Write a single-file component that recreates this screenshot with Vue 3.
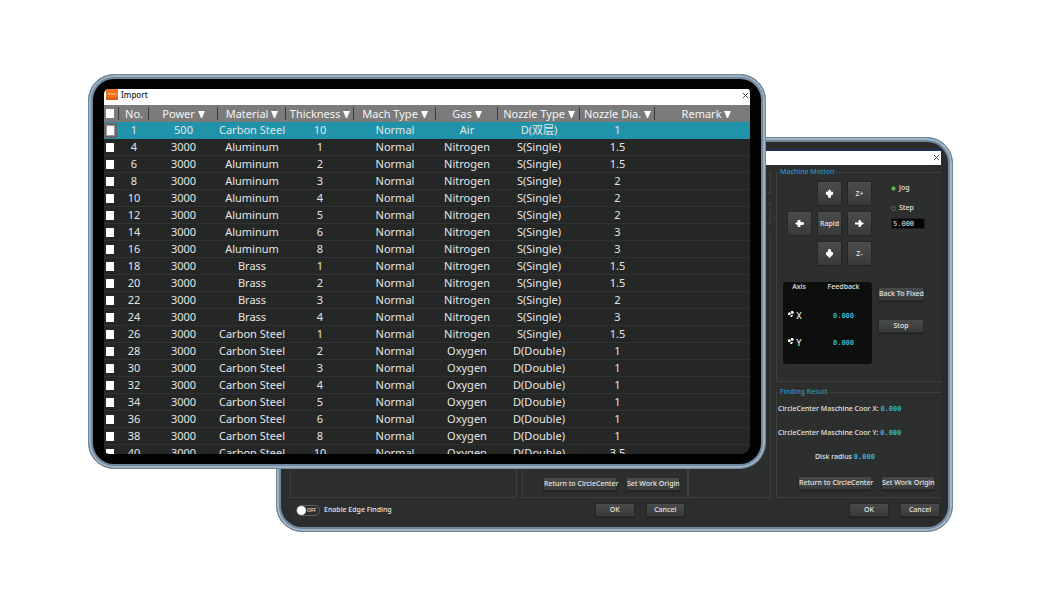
<script setup>
import { ref } from 'vue'

const columns = [
  { key: 'no', label: 'No.', filter: false },
  { key: 'power', label: 'Power', filter: true },
  { key: 'material', label: 'Material', filter: true },
  { key: 'thickness', label: 'Thickness', filter: true },
  { key: 'mach', label: 'Mach Type', filter: true },
  { key: 'gas', label: 'Gas', filter: true },
  { key: 'nozzle', label: 'Nozzle Type', filter: true },
  { key: 'dia', label: 'Nozzle Dia.', filter: true },
  { key: 'remark', label: 'Remark', filter: true },
]

const rows = [
  [1, 500, 'Carbon Steel', 10, 'Normal', 'Air', 'D(双层)', '1'],
  [4, 3000, 'Aluminum', 1, 'Normal', 'Nitrogen', 'S(Single)', '1.5'],
  [6, 3000, 'Aluminum', 2, 'Normal', 'Nitrogen', 'S(Single)', '1.5'],
  [8, 3000, 'Aluminum', 3, 'Normal', 'Nitrogen', 'S(Single)', '2'],
  [10, 3000, 'Aluminum', 4, 'Normal', 'Nitrogen', 'S(Single)', '2'],
  [12, 3000, 'Aluminum', 5, 'Normal', 'Nitrogen', 'S(Single)', '2'],
  [14, 3000, 'Aluminum', 6, 'Normal', 'Nitrogen', 'S(Single)', '3'],
  [16, 3000, 'Aluminum', 8, 'Normal', 'Nitrogen', 'S(Single)', '3'],
  [18, 3000, 'Brass', 1, 'Normal', 'Nitrogen', 'S(Single)', '1.5'],
  [20, 3000, 'Brass', 2, 'Normal', 'Nitrogen', 'S(Single)', '1.5'],
  [22, 3000, 'Brass', 3, 'Normal', 'Nitrogen', 'S(Single)', '2'],
  [24, 3000, 'Brass', 4, 'Normal', 'Nitrogen', 'S(Single)', '3'],
  [26, 3000, 'Carbon Steel', 1, 'Normal', 'Nitrogen', 'S(Single)', '1.5'],
  [28, 3000, 'Carbon Steel', 2, 'Normal', 'Oxygen', 'D(Double)', '1'],
  [30, 3000, 'Carbon Steel', 3, 'Normal', 'Oxygen', 'D(Double)', '1'],
  [32, 3000, 'Carbon Steel', 4, 'Normal', 'Oxygen', 'D(Double)', '1'],
  [34, 3000, 'Carbon Steel', 5, 'Normal', 'Oxygen', 'D(Double)', '1'],
  [36, 3000, 'Carbon Steel', 6, 'Normal', 'Oxygen', 'D(Double)', '1'],
  [38, 3000, 'Carbon Steel', 8, 'Normal', 'Oxygen', 'D(Double)', '1'],
  [40, 3000, 'Carbon Steel', 10, 'Normal', 'Oxygen', 'D(Double)', '3.5'],
]

const selected = ref(0)
const mode = ref('jog')
const step = ref('5.000')
const edge = ref(false)
</script>

<template>
  <main class="stage">
    <section class="device back" aria-label="Edge finding">
      <div class="strip"></div>
      <header class="bar">
        <button class="close" aria-label="Close dialog">
          <svg viewBox="0 0 8 8"><path d="M1 1L7 7M7 1L1 7" /></svg>
        </button>
      </header>
      <div class="body">
        <div class="group"></div>
        <div class="group actions">
          <button class="btn return">Return to CircleCenter</button>
          <button class="btn origin">Set Work Origin</button>
        </div>
        <div class="stack">
          <div class="group"></div>
          <div class="group"></div>
          <div class="group"></div>
        </div>
        <div class="side">
          <fieldset class="motion">
            <legend>Machine Motion</legend>
            <div class="drive">
              <div class="pad">
                <button class="key up" aria-label="Up">
                  <svg viewBox="0 0 10 10"><path d="M5 0L7 3H9V6L7 7L6 10H4L3 7L1 6V3H3Z" /></svg>
                </button>
                <button class="key zp">Z+</button>
                <button class="key left" aria-label="Left">
                  <svg viewBox="0 0 10 10"><path d="M0 5L3 3V1H6V3L10 4V6L6 7V9H3V7Z" /></svg>
                </button>
                <button class="key rapid">Rapid</button>
                <button class="key right" aria-label="Right">
                  <svg viewBox="0 0 10 10"><path d="M10 5L7 7L6 9H4V6L0 6V4H4V1H6L7 3Z" /></svg>
                </button>
                <button class="key down" aria-label="Down">
                  <svg viewBox="0 0 10 10"><path d="M5 10L7 8L9 6V4L7 3L6 0H4L3 3L1 4V6L3 8Z" /></svg>
                </button>
                <button class="key zm">Z-</button>
              </div>
              <div class="modes">
                <label><input v-model="mode" type="radio" name="mode" value="jog" />Jog</label>
                <label><input v-model="mode" type="radio" name="mode" value="step" />Step</label>
                <input v-model="step" class="step" type="text" aria-label="Step length" />
              </div>
            </div>
            <div class="feedback">
              <div class="panel">
                <table class="axes">
                  <thead>
                    <tr><th>Axis</th><th>Feedback</th></tr>
                  </thead>
                  <tbody>
                    <tr v-for="axis in ['X', 'Y']" :key="axis">
                      <td>
                        <svg viewBox="0 0 6 6"><path d="M3 0H5L6 2L4 3L3 2ZM0 2L2 1L3 3L2 4H0ZM3 4L5 4L4 6H2Z" /></svg>
                        {{ axis }}
                      </td>
                      <td class="value">0.000</td>
                    </tr>
                  </tbody>
                </table>
              </div>
              <div class="commands">
                <button class="btn">Back To Fixed</button>
                <button class="btn">Stop</button>
              </div>
            </div>
          </fieldset>
          <fieldset class="result">
            <legend>Finding Result</legend>
            <p>CircleCenter Maschine Coor X: <output class="value">0.000</output></p>
            <p>CircleCenter Maschine Coor Y: <output class="value">0.000</output></p>
            <p class="radius">Disk radius <output class="value">0.000</output></p>
            <div class="actions">
              <button class="btn return">Return to CircleCenter</button>
              <button class="btn origin">Set Work Origin</button>
            </div>
          </fieldset>
        </div>
      </div>
      <footer class="foot">
        <label class="switch">
          <input v-model="edge" type="checkbox" />
          <span class="track"><span class="knob"></span>OFF</span>
          Enable Edge Finding
        </label>
        <div class="confirm first">
          <button class="btn">OK</button>
          <button class="btn">Cancel</button>
        </div>
        <div class="confirm">
          <button class="btn">OK</button>
          <button class="btn">Cancel</button>
        </div>
      </footer>
    </section>

    <section class="device front" aria-label="Import">
      <div class="screen">
        <header class="title">
          <svg class="logo" viewBox="0 0 12 11">
            <rect width="12" height="11" fill="#ef7420" />
            <path d="M0 8H12V11H0Z" fill="#dc5f17" />
            <path d="M2 5H10" stroke="#ffc48c" />
          </svg>
          <span>Import</span>
          <button class="close" aria-label="Close import">
            <svg viewBox="0 0 8 8"><path d="M1 1L7 7M7 1L1 7" /></svg>
          </button>
        </header>
        <div class="list">
          <table class="data">
            <colgroup>
              <col class="c-check" />
              <col v-for="c in columns" :key="c.key" :class="'c-' + c.key" />
            </colgroup>
            <thead>
              <tr>
                <th><input type="checkbox" aria-label="Select all" /></th>
                <th v-for="c in columns" :key="c.key">
                  {{ c.label }}
                  <svg v-if="c.filter" viewBox="0 0 7 7"><path d="M0 0H7L4 7H3Z" /></svg>
                </th>
              </tr>
            </thead>
            <tbody>
              <tr v-for="(r, i) in rows" :key="r[0]" :class="{ active: i === selected }" @click="selected = i">
                <td><input type="checkbox" :aria-label="'Select ' + r[0]" /></td>
                <td v-for="(v, j) in r" :key="j">{{ v }}</td>
                <td></td>
              </tr>
            </tbody>
          </table>
        </div>
      </div>
    </section>
  </main>
</template>

<style>
body {
  background: #fff;
}
</style>

<style scoped>
* {
  box-sizing: border-box;
}
.stage {
  display: grid;
  height: 100vh;
  min-height: 560px;
  padding: 74px 107px 76px 88px;
  font-family: 'Noto Sans', 'Noto Sans CJK SC', sans-serif;
  color: #e4e6e5;
}
button,
input {
  font: inherit;
  color: inherit;
  margin: 0;
  padding: 0;
}
.device {
  grid-area: 1 / 1;
  min-width: 0;
  min-height: 0;
  display: flex;
  flex-direction: column;
  border: 1px solid #70879a;
  border-radius: 26px;
  overflow: hidden;
}
.back {
  margin: 63px 0 0 188px;
  background: #2d2f2e;
  box-shadow: inset 0 0 0 2px #a3b6c6, inset 0 0 0 4px #70869a, inset 0 0 0 11px #2c2b2b;
  padding: 4px 11px 4px 5px;
  font-size: 7px;
  font-weight: 500;
  line-height: 10px;
}
.front {
  margin: 0 187px 63px 0;
  background: #030202;
  box-shadow: inset 0 0 0 2px #9db2c3, inset 0 0 0 4px #70889d;
  padding: 14px 15px;
}
.strip {
  flex: none;
  height: 9px;
  border-bottom: 2px solid #1d3454;
}
.bar {
  flex: none;
  height: 14px;
  background: #fff;
  display: flex;
  justify-content: flex-end;
}
.close {
  width: 8px;
  height: 12px;
  border: 0;
  background: none;
  display: flex;
  align-items: center;
}
.close svg {
  width: 7px;
  height: 7px;
  fill: none;
  stroke: #333;
  stroke-width: 1;
}
.body {
  flex: 1;
  min-height: 0;
  display: grid;
  grid-template-columns: minmax(0, 227fr) minmax(0, 166fr) minmax(0, 78fr) 165px;
  column-gap: 5px;
  padding: 2px 0 0 8px;
}
.group {
  border: 1px solid #3d403f;
}
.body > .group {
  margin-top: 5px;
}
.actions {
  display: flex;
  gap: 9px;
  justify-content: flex-end;
  align-items: flex-end;
}
.group.actions {
  padding: 0 7px 6px 0;
}
.stack {
  display: grid;
  grid-template-rows: 21px 21px 1fr;
  row-gap: 10px;
  margin: 5px 0 0 -5px;
}
.btn {
  height: 14px;
  border: 1px solid #282a29;
  background: linear-gradient(#484b4a, #393b3b);
  font-size: 7px;
  line-height: 10px;
  white-space: nowrap;
  box-shadow: 0 1px 1px #202121;
}
.return {
  width: 74px;
}
.origin {
  width: 54px;
}
.side {
  display: flex;
  flex-direction: column;
}
fieldset {
  margin: 0;
  min-width: 0;
  border: 1px solid #3d403f;
  border-right: 0;
}
legend {
  padding: 0 2px;
  color: #2e94be;
  line-height: 10px;
}
.motion {
  height: 215px;
  padding: 4px 0 0 1px;
}
.drive {
  display: flex;
  padding-left: 9px;
  gap: 19px;
}
.pad {
  display: grid;
  grid-template-columns: repeat(3, 25px);
  grid-template-rows: repeat(3, 25px);
  grid-template-areas: '. up zp' 'left rapid right' '. down zm';
  gap: 5px;
}
.key {
  border: 1px solid #252726;
  background: linear-gradient(#4a4d4c, #383a3a);
  font-size: 7px;
  display: flex;
  align-items: center;
  justify-content: center;
}
.key svg {
  width: 9px;
  height: 9px;
  fill: #fff;
}
.up {
  grid-area: up;
}
.zp {
  grid-area: zp;
}
.left {
  grid-area: left;
}
.rapid {
  grid-area: rapid;
}
.right {
  grid-area: right;
}
.down {
  grid-area: down;
}
.zm {
  grid-area: zm;
}
.modes {
  display: flex;
  flex-direction: column;
  gap: 10px;
  padding-top: 2px;
  width: 34px;
}
.modes label {
  display: flex;
  align-items: center;
  gap: 3px;
}
.modes input[type='radio'] {
  appearance: none;
  width: 5px;
  height: 5px;
  border: 1px solid #5e6261;
  border-radius: 50%;
}
.modes input[type='radio']:checked {
  background: #6cc463;
  border-color: #2f7a33;
}
.modes .step {
  width: 34px;
  height: 11px;
  border: 1px solid #1c1d1d;
  background: #050505;
  font-family: 'DejaVu Sans Mono', monospace;
  font-size: 7px;
  line-height: 9px;
  margin-top: -5px;
  padding-left: 1px;
}
.feedback {
  display: flex;
  align-items: flex-start;
  gap: 6px;
  padding: 16px 0 0 5px;
}
.panel {
  width: 89px;
  height: 82px;
  background: #0d0e0e;
  border-radius: 3px;
}
.axes {
  width: 100%;
  border-collapse: collapse;
}
.axes th {
  height: 20px;
  padding: 0;
  font-weight: 500;
  vertical-align: top;
}
.axes th:first-child {
  width: 32px;
}
.axes td {
  height: 27px;
  padding: 0 0 0 5px;
  font-size: 9px;
}
.axes svg {
  width: 6px;
  height: 6px;
  fill: #fff;
  vertical-align: 2px;
}
.value,
.axes .value {
  font-family: 'DejaVu Sans Mono', monospace;
  font-weight: 700;
  font-size: 7px;
  color: #35b3cb;
}
.axes .value {
  text-align: center;
  padding: 0;
}
.commands {
  display: flex;
  flex-direction: column;
  gap: 18px;
  padding-top: 5px;
  width: 46px;
}
.result {
  margin-top: 5px;
  flex: 1;
  padding: 7px 6px 7px 1px;
  display: flex;
  flex-direction: column;
  gap: 14px;
}
.result p {
  margin: 0;
  white-space: nowrap;
}
.result .radius {
  padding-left: 37px;
}
.result .actions {
  margin-top: auto;
}
.foot {
  flex: none;
  height: 32px;
  display: grid;
  grid-template-columns: minmax(0, 313fr) 90px minmax(0, 164fr) 91px;
  align-items: center;
  padding: 0 1px 2px 0;
}
.foot .first {
  grid-column: 2;
}
.foot .confirm:last-child {
  grid-column: 4;
}
.confirm {
  display: grid;
  grid-template-columns: 1fr 1fr;
  gap: 11px;
}
.switch {
  display: flex;
  align-items: center;
  gap: 4px;
  padding-left: 14px;
}
.switch input {
  position: absolute;
  opacity: 0;
}
.track {
  width: 24px;
  height: 11px;
  border: 1px solid #606362;
  border-radius: 6px;
  display: flex;
  align-items: center;
  gap: 1px;
  font-size: 5px;
}
.knob {
  width: 9px;
  height: 9px;
  border-radius: 50%;
  background: #fff;
}
.screen {
  flex: 1;
  min-height: 0;
  display: flex;
  flex-direction: column;
  border-radius: 5px 3px 9px 5px;
  overflow: hidden;
  background: #252726;
}
.title {
  flex: none;
  height: 16px;
  background: #fff;
  color: #222;
  display: flex;
  font-size: 8px;
  font-weight: 500;
  line-height: 12px;
  gap: 3px;
  padding-left: 2px;
}
.title .close {
  margin-left: auto;
}
.logo {
  width: 12px;
  height: 11px;
}
.list {
  flex: 1;
  min-height: 0;
  overflow: hidden;
}
.data {
  width: 100%;
  table-layout: fixed;
  border-collapse: separate;
  border-spacing: 0;
  font-size: 11px;
  line-height: 16px;
}
.c-check {
  width: 15px;
}
.c-no {
  width: 30px;
}
.c-power {
  width: 69px;
}
.c-material,
.c-thickness {
  width: 68px;
}
.c-mach {
  width: 82px;
}
.c-gas {
  width: 62px;
}
.c-nozzle {
  width: 82px;
}
.c-dia {
  width: 75px;
}
.data th,
.data td {
  height: 17px;
  padding: 0;
  text-align: center;
  font-weight: 400;
  white-space: nowrap;
}
.data th {
  background: linear-gradient(#3a3a3a, #3a3a3a) right center / 1px 13px no-repeat #7b7b7b;
  color: #f5f5f5;
}
.data th:last-child {
  background: #7b7b7b;
  padding-left: 8px;
}
.data th svg {
  width: 7px;
  height: 7px;
  fill: #fff;
}
.data td {
  border-bottom: 1px solid #2f3231;
}
.data .active td {
  background: #2092aa;
  border-color: #2092aa;
}
.data input {
  appearance: none;
  display: block;
  width: 8px;
  height: 9px;
  margin-left: 2px;
  background: #fff;
}
.data .active input {
  width: 13px;
  height: 15px;
  margin-left: 0;
  border: 2px solid #666;
  box-shadow: inset 0 0 0 1px #999;
}
</style>
